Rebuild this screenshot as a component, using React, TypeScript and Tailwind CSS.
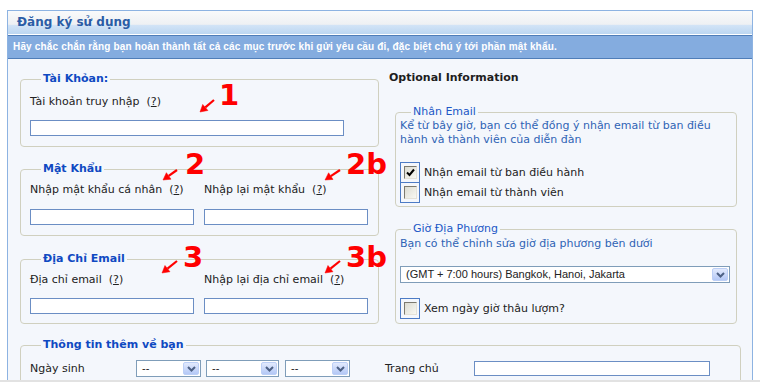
import type { ReactNode } from 'react'

type Pt = [number, number]

// red hand-drawn style annotations over the form (page coordinates)
const MARKS: { text: string; left: number; top: number }[] = [
  { text: '1', left: 219, top: 81 },
  { text: '2', left: 185, top: 150 },
  { text: '2b', left: 346, top: 150 },
  { text: '3', left: 183, top: 243 },
  { text: '3b', left: 346, top: 243 },
]

const ARROWS: [Pt, Pt][] = [
  [[214, 100], [200, 112]],
  [[177, 170], [163, 180]],
  [[340, 170], [325, 180]],
  [[177, 261], [162, 273]],
  [[340, 261], [325, 273]],
]

function Arrow({ tail, tip }: { tail: Pt; tip: Pt }) {
  const dx = tip[0] - tail[0]
  const dy = tip[1] - tail[1]
  const len = Math.hypot(dx, dy)
  const ux = dx / len
  const uy = dy / len
  const bx = tip[0] - ux * 7
  const by = tip[1] - uy * 7
  const px = -uy * 4
  const py = ux * 4
  return (
    <g fill="#ff0000" stroke="#ff0000">
      <line x1={tail[0]} y1={tail[1]} x2={bx} y2={by} strokeWidth="2.2" />
      <polygon points={`${tip[0]},${tip[1]} ${bx + px},${by + py} ${bx - px},${by - py}`} strokeWidth="0.5" />
    </g>
  )
}

function Q() {
  return (
    <span className="ml-[7px]">
      (<span className="underline">?</span>)
    </span>
  )
}

function Field({ legend, bold = true, className, children }: { legend: string; bold?: boolean; className: string; children: ReactNode }) {
  return (
    <fieldset className={`border border-[#d0d0bf] rounded-[4px] ${className}`}>
      <legend
        className={
          bold
            ? 'ml-[11px] px-[2px] leading-[14px] font-bold text-[#0f49c2]'
            : 'ml-[11px] px-[2px] leading-[14px] text-[#2157c6]'
        }
      >
        {legend}
      </legend>
      {children}
    </fieldset>
  )
}

function Select({ value, className }: { value: string; className: string }) {
  return (
    <div className={`flex h-[17px] bg-white border border-[#7f9db9] ${className}`}>
      <span className="flex-1 pl-[5px] leading-[15px] text-[11px] font-['Liberation_Sans',sans-serif] text-[#222] whitespace-nowrap overflow-hidden">
        {value}
      </span>
      <span className="w-[16px] my-px mr-px rounded-[2px] border border-[#bccff6] bg-[linear-gradient(#e2eafd,#b4c8f6)] flex items-center justify-center">
        <svg width="9" height="6" viewBox="0 0 9 6">
          <path d="M1 1 L4.5 4.5 L8 1" fill="none" stroke="#4d6185" strokeWidth="2" />
        </svg>
      </span>
    </div>
  )
}

function Check({ checked = false }: { checked?: boolean }) {
  return (
    <span className="w-[20px] h-[21px] border border-[#4c7bc5] flex items-center justify-center shrink-0">
      <span className="w-[13px] h-[13px] border border-t-[#7c7a6f] border-l-[#7c7a6f] border-r-[#e4e2d8] border-b-[#e4e2d8] bg-[linear-gradient(135deg,#dcdcd2,#f8f8f2)] flex items-center justify-center">
        {checked && (
          <svg width="9" height="9" viewBox="0 0 9 9">
            <path d="M1 4.5 L3.5 7 L8 1.5" fill="none" stroke="#000" strokeWidth="2" />
          </svg>
        )}
      </span>
    </span>
  )
}

function Input({ className }: { className: string }) {
  return <input className={`block h-[16px] bg-white border border-[#6b8ec4] outline-none ${className}`} />
}

export default function App() {
  return (
    <div className="relative w-[760px] h-[382px] overflow-hidden bg-white font-['DejaVu_Sans',sans-serif] text-[11px] leading-[14px] text-[#222]">
      <div className="ml-[7px] mt-[10px] w-[746px] h-[370px] border-x border-t border-[#8db3e2] bg-[#f4f7fc] flex flex-col overflow-hidden">
        {/* title bar */}
        <div className="shrink-0 h-[23px] pl-[9px] pt-[4px] bg-[linear-gradient(to_bottom,#f9fafb_0%,#eef0f3_58%,#d2e3f6_62%,#bcd6f1_100%)]">
          <span className="font-bold text-[12px] leading-[15px] text-[#2a5ca6]">Đăng ký sử dụng</span>
        </div>
        <div className="shrink-0 h-px bg-white" />
        <div className="shrink-0 -mx-px h-[24px] border border-[#4f7db8] bg-[#84acdf] pl-[5px] flex items-center text-white font-bold text-[10px] tracking-[0.17px] font-['Liberation_Sans',sans-serif]">
          Hãy chắc chắn rằng bạn hoàn thành tất cả các mục trước khi gửi yêu cầu đi, đặc biệt chú ý tới phần mật khẩu.
        </div>

        <div className="flex-1 min-h-0 pl-[12px] pt-[13px]">
          <div className="flex">
            {/* left column */}
            <div className="w-[359px]">
              <Field legend="Tài Khỏan:" className="pl-[9px] pt-[9px] pb-[10px]">
                <div>
                  Tài khoản truy nhập
                  <Q />
                </div>
                <Input className="mt-[11px] w-[314px]" />
              </Field>

              <Field legend="Mật Khẩu" className="mt-[15px] pl-[9px] pt-[7px] pb-[10px]">
                <div className="flex gap-[10px]">
                  <div className="w-[164px]">
                    <div>
                      Nhập mật khẩu cá nhân
                      <Q />
                    </div>
                    <Input className="mt-[12px] w-[164px]" />
                  </div>
                  <div className="w-[164px]">
                    <div>
                      Nhập lại mật khẩu
                      <Q />
                    </div>
                    <Input className="mt-[12px] w-[164px]" />
                  </div>
                </div>
              </Field>

              <Field legend="Địa Chỉ Email" className="mt-[16px] pl-[9px] pt-[7px] pb-[9px]">
                <div className="flex gap-[10px]">
                  <div className="w-[164px]">
                    <div>
                      Địa chỉ email
                      <Q />
                    </div>
                    <Input className="mt-[11px] w-[164px]" />
                  </div>
                  <div className="w-[164px]">
                    <div className="whitespace-nowrap">
                      Nhập lại địa chỉ email
                      <Q />
                    </div>
                    <Input className="mt-[11px] w-[164px]" />
                  </div>
                </div>
              </Field>
            </div>

            {/* right column */}
            <div className="ml-[10px] w-[348px]">
              <div className="-mt-px font-bold text-[#1e1e1e]">Optional Information</div>

              <Field legend="Nhân Email" bold={false} className="ml-[6px] w-[342px] mt-[20px] pl-[4px] pb-[3px]">
                <div className="w-[330px] text-[#2f63b5]">
                  Kể từ bây giờ, bạn có thể đồng ý nhận email từ ban điều hành và thành viên của diễn đàn
                </div>
                <div className="mt-[15px] flex items-center gap-[4px]">
                  <Check checked />
                  <span>Nhận email từ ban điều hành</span>
                </div>
                <div className="-mt-px flex items-center gap-[4px]">
                  <Check />
                  <span>Nhận email từ thành viên</span>
                </div>
              </Field>

              <Field legend="Giờ Địa Phương" bold={false} className="ml-[6px] w-[342px] mt-[15px] pl-[4px] pb-[4px]">
                <div className="mt-px text-[#2f63b5]">Bạn có thể chỉnh sửa giờ địa phương bên dưới</div>
                <Select value="(GMT + 7:00 hours) Bangkok, Hanoi, Jakarta" className="mt-[15px] w-[330px]" />
                <div className="mt-[15px] flex items-center gap-[4px]">
                  <Check />
                  <span>Xem ngày giờ thâu lượm?</span>
                </div>
              </Field>
            </div>
          </div>

          {/* bottom section */}
          <fieldset className="mt-[14px] w-[721px] h-[60px] border border-[#d0d0bf] rounded-[4px] pl-[9px] pt-[8px]">
            <legend className="ml-[11px] px-[2px] leading-[14px] font-bold text-[11px] text-[#0f49c2]">Thông tin thêm về bạn</legend>
            <div className="flex items-center">
              <span className="w-[106px]">Ngày sinh</span>
              <Select value="--" className="w-[65px]" />
              <Select value="--" className="ml-[5px] w-[73px]" />
              <Select value="--" className="ml-[6px] w-[65px]" />
              <span className="ml-[35px] w-[89px]">Trang chủ</span>
              <input className="block h-[15px] w-[236px] bg-white border border-[#6b8ec4] outline-none" />
            </div>
          </fieldset>
        </div>
      </div>
      <div className="h-[2px] bg-[#e2e2e2]" />

      {/* annotations */}
      <svg className="absolute inset-0 pointer-events-none" width="760" height="382">
        {ARROWS.map(([a, b], i) => (
          <Arrow key={i} tail={a} tip={b} />
        ))}
      </svg>
      {MARKS.map(m => (
        <span
          key={m.text}
          className="absolute font-['DejaVu_Sans',sans-serif] font-bold text-[29px] leading-[29px] text-[#ff0000] pointer-events-none"
          style={{ left: m.left, top: m.top }}
        >
          {m.text}
        </span>
      ))}
    </div>
  )
}
